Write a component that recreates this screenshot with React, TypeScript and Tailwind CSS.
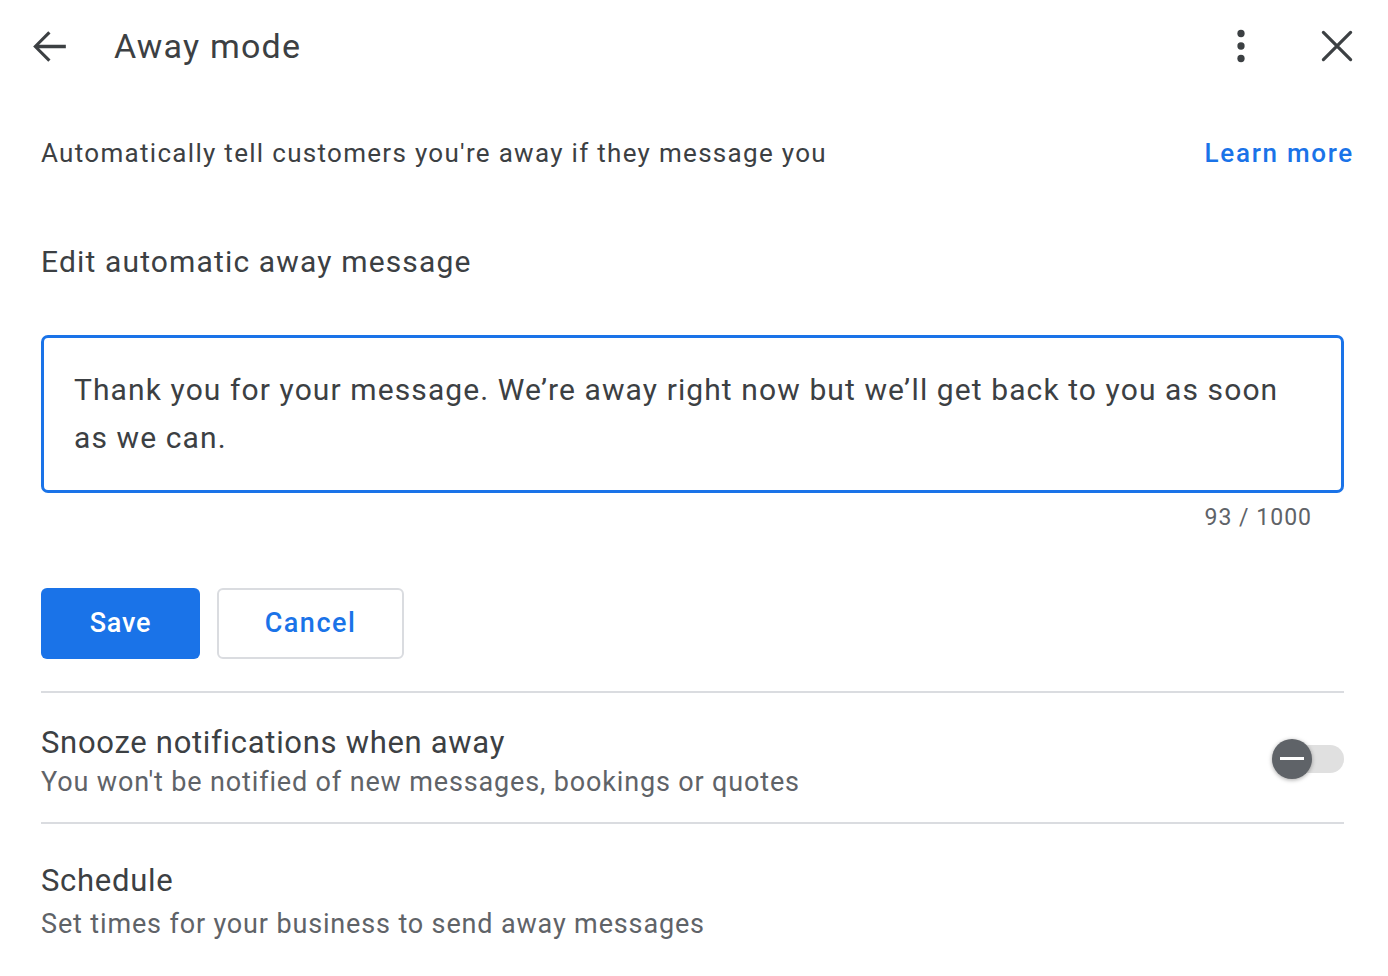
import { useState } from 'react'

function BackIcon() {
  return (
    <svg width="49" height="49" viewBox="0 0 24 24" className="fill-[#3c4043]">
      <path d="M20 11.2H6.9l5.6-5.6L11.4 4.5 4 12l7.4 7.5 1.1-1.1-5.6-5.6H20z" />
    </svg>
  )
}

function MoreIcon() {
  return (
    <svg width="50" height="50" viewBox="0 0 24 24" className="fill-[#3c4043]">
      <circle cx="12" cy="6" r="1.75" />
      <circle cx="12" cy="12" r="1.75" />
      <circle cx="12" cy="18" r="1.75" />
    </svg>
  )
}

function CloseIcon() {
  return (
    <svg width="48" height="48" viewBox="0 0 24 24" className="stroke-[#3c4043]" strokeWidth="1.6" strokeLinecap="round">
      <path d="M5.2 5.2l13.6 13.6M18.8 5.2L5.2 18.8" />
    </svg>
  )
}

function SnoozeToggle({ on, onChange }: { on: boolean; onChange: (v: boolean) => void }) {
  return (
    <button onClick={() => onChange(!on)} className="relative w-[72px] h-[40px] shrink-0 mb-[6px]">
      <div className="absolute right-0 top-[6px] w-[60px] h-[28px] rounded-full bg-[#e0e0e0]" />
      <div className="absolute left-0 top-0 w-[40px] h-[40px] rounded-full bg-[#5f6368] shadow-[0_1px_4px_rgba(0,0,0,0.35)] flex items-center justify-center">
        <div className="w-[24px] h-[3px] bg-white" />
      </div>
    </button>
  )
}

export default function App() {
  const [message, setMessage] = useState(
    'Thank you for your message. We\u2019re away right now but we\u2019ll get back to you as soon as we can.'
  )
  const [snooze, setSnooze] = useState(false)

  return (
    <div className="w-[1388px] h-[976px] bg-white text-[#3c4043] font-['Roboto',sans-serif] overflow-hidden">
      {/* Header */}
      <div className="h-[92px] flex items-center pl-[25px] pr-[27px]">
        <BackIcon />
        <h1 className="ml-[40px] text-[34px] leading-[40px] font-normal tracking-[1.2px]">Away mode</h1>
        <div className="ml-auto flex items-center gap-[47px]">
          <MoreIcon />
          <CloseIcon />
        </div>
      </div>

      <div className="pl-[41px] pr-[44px]">
        {/* Description */}
        <div className="mt-[45px] flex items-center justify-between mr-[-10px]">
          <p className="text-[26px] leading-[32px] tracking-[1.3px]">
            Automatically tell customers you're away if they message you
          </p>
          <a className="text-[26px] leading-[32px] text-[#1a73e8] font-medium tracking-[1.7px]">Learn more</a>
        </div>

        <h2 className="mt-[75px] text-[30px] leading-[36px] font-normal tracking-[1.15px]">Edit automatic away message</h2>

        {/* Message box */}
        <div className="mt-[55px] border-[3px] border-[#1a73e8] rounded-[7px] px-[30px] py-[28px]">
          <textarea
            value={message}
            onChange={(e) => setMessage(e.target.value)}
            rows={2}
            className="block w-full h-[96px] resize-none outline-none overflow-hidden text-[30px] leading-[48px] text-[#3c4043] tracking-[1.1px]"
          />
        </div>
        <div className="mt-[11px] pr-[32px] text-right text-[23px] leading-[28px] text-[#5f6368] tracking-[1px]">
          {message.length} / 1000
        </div>

        {/* Buttons */}
        <div className="mt-[56px] flex gap-[17px]">
          <button className="w-[159px] h-[71px] rounded-[6px] bg-[#1a73e8] text-white text-[27px] font-medium tracking-[0.8px]">
            Save
          </button>
          <button className="w-[187px] h-[71px] rounded-[6px] border-2 border-[#dadce0] text-[#1a73e8] text-[27px] font-medium tracking-[1.5px]">
            Cancel
          </button>
        </div>

        <div className="mt-[32px] h-[2px] bg-[#dadce0]" />

        {/* Snooze */}
        <div className="pt-[31px] flex items-center justify-between">
          <div>
            <div className="text-[31px] leading-[38px] tracking-[0.7px]">Snooze notifications when away</div>
            <div className="mt-[3px] text-[27px] leading-[34px] text-[#5f6368] tracking-[0.85px]">
              You won't be notified of new messages, bookings or quotes
            </div>
          </div>
          <SnoozeToggle on={snooze} onChange={setSnooze} />
        </div>

        <div className="mt-[23px] h-[2px] bg-[#dadce0]" />

        {/* Schedule */}
        <div className="pt-[38px]">
          <div className="text-[31px] leading-[38px] tracking-[0.7px]">Schedule</div>
          <div className="mt-[7px] text-[27px] leading-[34px] text-[#5f6368] tracking-[0.85px]">
            Set times for your business to send away messages
          </div>
        </div>
      </div>
    </div>
  )
}
